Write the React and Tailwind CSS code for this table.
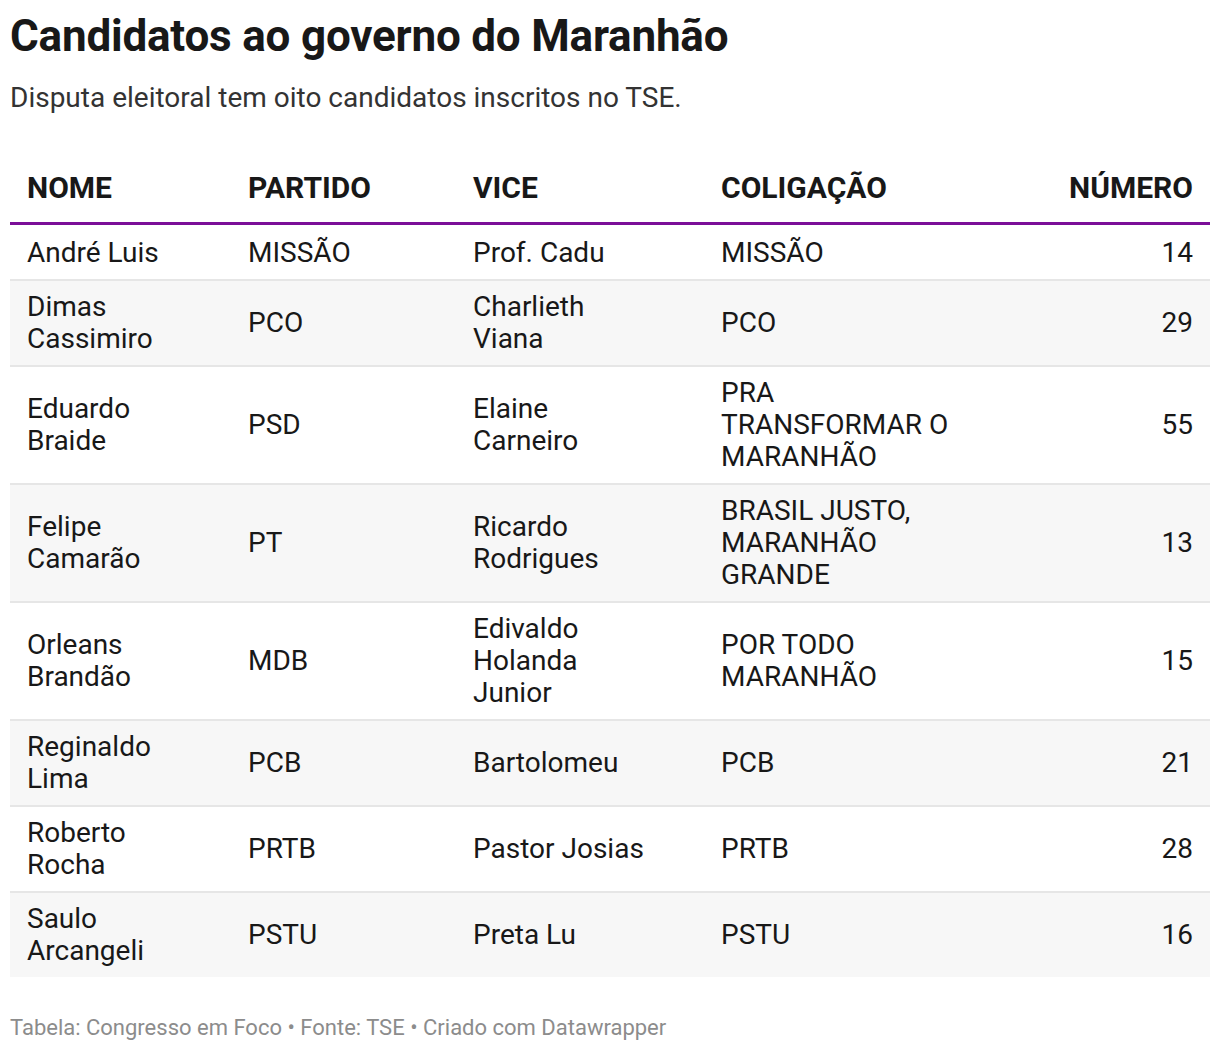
const rows = [
  { nome: ["André Luis"], partido: "MISSÃO", vice: ["Prof. Cadu"], coligacao: ["MISSÃO"], numero: 14 },
  { nome: ["Dimas", "Cassimiro"], partido: "PCO", vice: ["Charlieth", "Viana"], coligacao: ["PCO"], numero: 29 },
  { nome: ["Eduardo", "Braide"], partido: "PSD", vice: ["Elaine", "Carneiro"], coligacao: ["PRA", "TRANSFORMAR O", "MARANHÃO"], numero: 55 },
  { nome: ["Felipe", "Camarão"], partido: "PT", vice: ["Ricardo", "Rodrigues"], coligacao: ["BRASIL JUSTO,", "MARANHÃO", "GRANDE"], numero: 13 },
  { nome: ["Orleans", "Brandão"], partido: "MDB", vice: ["Edivaldo", "Holanda", "Junior"], coligacao: ["POR TODO", "MARANHÃO"], numero: 15 },
  { nome: ["Reginaldo", "Lima"], partido: "PCB", vice: ["Bartolomeu"], coligacao: ["PCB"], numero: 21 },
  { nome: ["Roberto", "Rocha"], partido: "PRTB", vice: ["Pastor Josias"], coligacao: ["PRTB"], numero: 28 },
  { nome: ["Saulo", "Arcangeli"], partido: "PSTU", vice: ["Preta Lu"], coligacao: ["PSTU"], numero: 16 },
];

const Lines = ({ lines }) => (
  <>
    {lines.map((l) => (
      <span key={l} className="block">
        {l}
      </span>
    ))}
  </>
);

export default function App() {
  return (
    <div
      className="w-[1220px] min-h-[1052px] bg-white px-[10px] pt-[12px] text-[#181818]"
      style={{ fontFamily: "Roboto, 'Liberation Sans', sans-serif" }}
    >
      <h1 className="text-[44px] font-bold leading-[48px] tracking-[-0.2px]">
        Candidatos ao governo do Maranhão
      </h1>
      <p className="mt-[22px] text-[28px] leading-[32px] text-[#333]">
        Disputa eleitoral tem oito candidatos inscritos no TSE.
      </p>

      <table className="mt-[58px] w-full table-fixed border-collapse text-[28px] leading-[32px]">
        <colgroup>
          <col className="w-[221px]" />
          <col className="w-[225px]" />
          <col className="w-[248px]" />
          <col />
          <col className="w-[200px]" />
        </colgroup>
        <thead>
          <tr className="border-b-[3px] border-[#7b0e98] text-[30px] font-bold uppercase">
            <th className="pl-[17px] pb-[18px] text-left">Nome</th>
            <th className="pl-[17px] pb-[18px] text-left">Partido</th>
            <th className="pl-[17px] pb-[18px] text-left">Vice</th>
            <th className="pl-[17px] pb-[18px] text-left">Coligação</th>
            <th className="pr-[17px] pb-[18px] text-right">Número</th>
          </tr>
        </thead>
        <tbody>
          {rows.map((r, i) => {
            const pad = i === 0 ? "pt-[12px] pb-[10px]" : "py-[10px]";
            return (
              <tr
                key={r.numero}
                className={`${i % 2 === 1 ? "bg-[#f7f7f7]" : "bg-white"} ${
                  i < rows.length - 1 ? "border-b-2 border-[#e6e6e6]" : ""
                }`}
              >
                <td className={`${pad} pl-[17px] align-middle`}>
                  <Lines lines={r.nome} />
                </td>
                <td className={`${pad} pl-[17px] align-middle`}>{r.partido}</td>
                <td className={`${pad} pl-[17px] align-middle`}>
                  <Lines lines={r.vice} />
                </td>
                <td className={`${pad} pl-[17px] align-middle`}>
                  <Lines lines={r.coligacao} />
                </td>
                <td className={`${pad} pr-[17px] text-right align-middle`}>{r.numero}</td>
              </tr>
            );
          })}
        </tbody>
      </table>

      <p className="mt-[38px] text-[22px] leading-[26px] text-[#8c8c8c]">
        Tabela: Congresso em Foco • Fonte: TSE • Criado com Datawrapper
      </p>
    </div>
  );
}
